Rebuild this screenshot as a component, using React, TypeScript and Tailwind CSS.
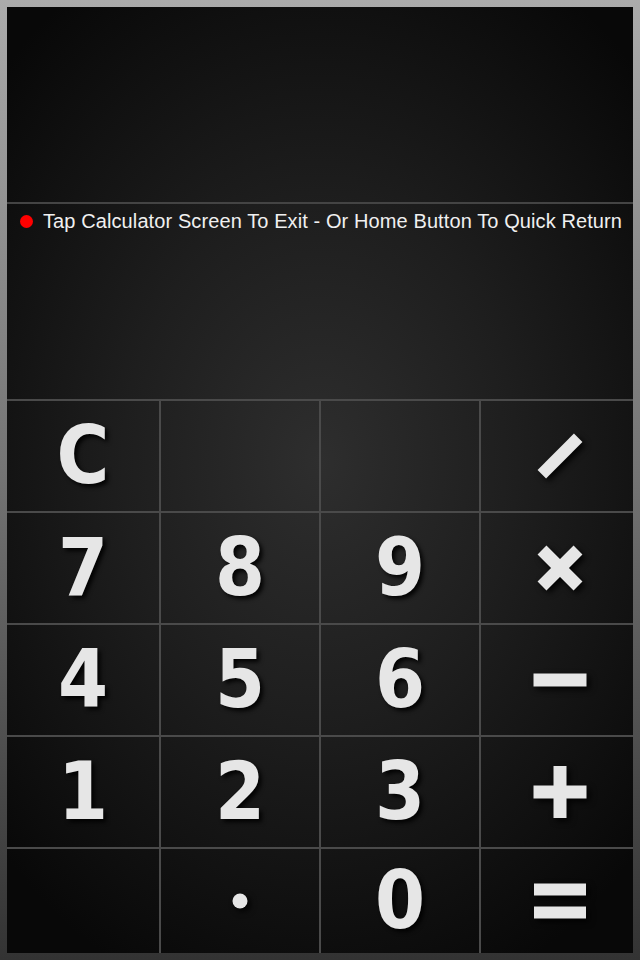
import React from "react";

const Sym = ({ kind }: { kind: string }) => {
  const c = "#e6e6e6";
  return (
    <svg width="64" height="64" viewBox="0 0 64 64" className="[filter:drop-shadow(3px_3px_3px_rgba(0,0,0,0.9))]">
      {kind === "/" && <line x1="13.8" y1="50.2" x2="50.2" y2="13.8" stroke={c} strokeWidth="12" />}
      {kind === "x" && (
        <g stroke={c} strokeWidth="12.5">
          <line x1="14" y1="50" x2="50" y2="14" />
          <line x1="14" y1="14" x2="50" y2="50" />
        </g>
      )}
      {kind === "-" && <rect x="5.5" y="25.5" width="53" height="13" fill={c} />}
      {kind === "+" && (
        <g fill={c}>
          <rect x="5.5" y="25.5" width="53" height="13" />
          <rect x="25.5" y="6" width="13" height="52" />
        </g>
      )}
      {kind === "=" && (
        <g fill={c}>
          <rect x="6" y="14.5" width="52" height="12" />
          <rect x="6" y="37.5" width="52" height="12" />
        </g>
      )}
      {kind === "." && <circle cx="32" cy="32" r="7.5" fill={c} />}
    </svg>
  );
};

const Cell = ({ label, col, h }: { label?: string; col: number; h: string }) => {
  const isSym = label && ["/", "x", "-", "+", "=", "."].includes(label);
  return (
    <div
      className={
        "flex items-center justify-center border-t-2 border-[#4a4a4a] " +
        (col > 0 ? "border-l-2 " : "") +
        (col === 3 ? "pl-[6px] " : "") +
        h
      }
    >
      {label &&
        (isSym ? (
          <Sym kind={label} />
        ) : (
          <span className="font-['DejaVu_Sans_Condensed','DejaVu_Sans',sans-serif] font-bold text-[80px] leading-none text-[#e6e6e6] [text-shadow:3px_3px_4px_rgba(0,0,0,0.9)]">
            {label}
          </span>
        ))}
    </div>
  );
};

const rows: (string | undefined)[][] = [
  ["C", undefined, undefined, "/"],
  ["7", "8", "9", "x"],
  ["4", "5", "6", "-"],
  ["1", "2", "3", "+"],
  [undefined, ".", "0", "="],
];

export default function App() {
  return (
    <div className="w-[640px] h-[960px] p-[7px] bg-gradient-to-b from-[#ababab] via-[#737373] to-[#333333]">
      <div className="h-full flex flex-col bg-[radial-gradient(ellipse_70%_60%_at_50%_48%,#2e2e2e_0%,#1e1e1e_45%,#080808_100%)] bg-black">
        <div className="h-[197px] border-b-2 border-[#444444] shrink-0" />
        <div className="h-[195px] shrink-0 flex items-start pl-[13px] pt-[5px]">
          <div className="flex items-center gap-[10px] h-[24px]">
            <span className="w-[13px] h-[13px] rounded-full bg-[#ff0000] inline-block" />
            <span className="font-['Liberation_Sans',Arial,sans-serif] text-[20px] tracking-[0.1px] text-[#f0f0f0] leading-none">
              Tap Calculator Screen To Exit - Or Home Button To Quick Return
            </span>
          </div>
        </div>
        <div className="grid grid-cols-[152px_160px_160px_154px] flex-1">
          {rows.map((r, ri) =>
            r.map((l, ci) => (
              <Cell key={ri + "-" + ci} label={l} col={ci} h={ri === 4 ? "h-[106px]" : "h-[112px]"} />
            ))
          )}
        </div>
      </div>
    </div>
  );
}
